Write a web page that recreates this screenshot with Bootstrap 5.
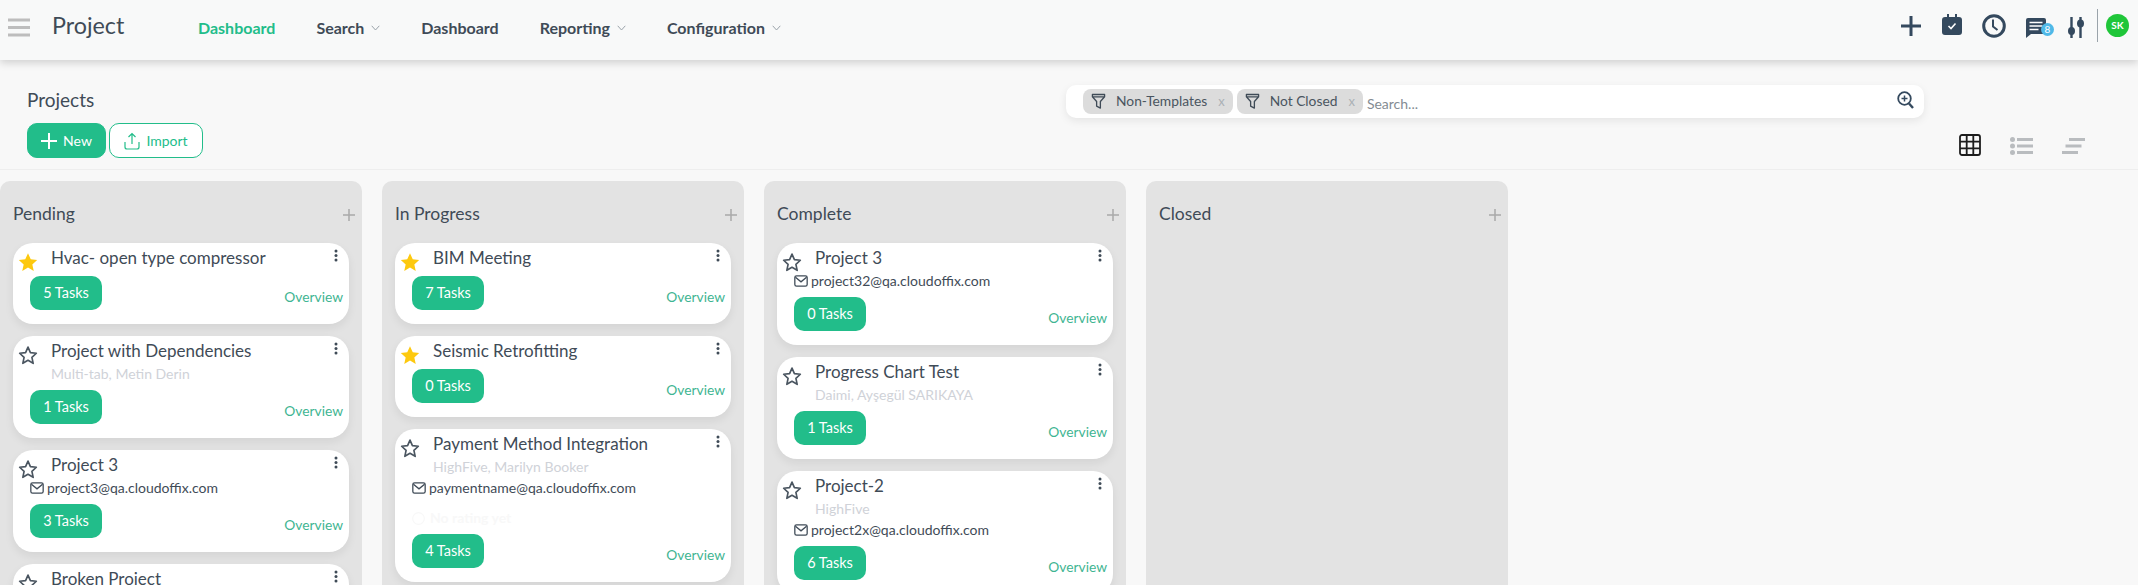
<!DOCTYPE html>
<html lang="en"><head><meta charset="utf-8"><title>Projects</title>
<link href="https://cdn.jsdelivr.net/npm/bootstrap@5.3.0/dist/css/bootstrap.min.css" rel="stylesheet">
<style>
html,body{height:100%}
body{overflow:hidden;background:#f8f8f8;color:#3f4b57;font-family:"Lato","Noto Sans",sans-serif;font-size:14px}
.topbar{height:60px;background:#f8f9f9;box-shadow:0 3px 8px rgba(0,0,0,.16);padding:0 0 0 8px;flex-wrap:nowrap;position:relative;z-index:2}
.burger{width:22px;height:19px;margin-top:-6px;color:#bdbdbd}
.brand-txt{font-size:23.300px;line-height:1;color:#3f4b57;margin:-9px 0 0 22px;width:73px;padding:0}
.menu{margin-left:52.500px}
.topbar .navbar-nav.menu .nav-link{font-size:16px;font-weight:700;color:#3f4b57;padding:0 20.500px;line-height:20px;display:flex;align-items:center;gap:7px;margin-top:-4px}
.topbar .navbar-nav.menu .nav-link.on{color:#22bd8a}
.chev{width:9px;height:6px;color:#9aa3aa}
.tools{margin-left:auto;padding-right:9px;height:60px}
.ti{display:block;color:#34495e}
.sep{width:1px;height:33px;background:#9aa3aa;margin:-10px 8px 0 0}
.ava{width:23px;height:23px;border-radius:50%;background:#1fc639;color:#fff;font-size:10px;font-weight:700;margin-top:-10px}
.toolbar{height:110px;border-bottom:1px solid #eee;padding-left:27px}
.tleft{width:1039px}
.ptitle{font-size:19px;line-height:24px;margin:28px 0 11px;font-weight:400;color:#3f4b57}
.bt{height:35px;border-radius:10px;font-size:14px;font-weight:400;padding:0;display:flex;align-items:center;justify-content:center;gap:6px}
.bt-new{width:79px;background:#22bd8a;border:1px solid #22bd8a;color:#fff}
.bt-imp{width:94px;margin-left:3px;background:#fff;border:1px solid #22bd8a;color:#22bd8a}
.sbar{width:858px;height:33px;margin-top:25px;background:#fff;border-radius:10px;box-shadow:0 3px 9px rgba(0,0,0,.08);padding:0 10px 0 17px}
.chipx{height:25px;border-radius:8px;background:#dcdcdc;color:#4a5560;font-size:13.800px;padding:0 8px;gap:10px;margin-right:4px;white-space:nowrap}
.chipx .xx{color:#aab0b5;font-size:13px;margin-left:1px}
.sinp{font-size:14px;color:#848c93;margin:4px 0 0 0}
.szoom{margin-top:-3px}
.views{margin-left:auto;padding:74px 53px 0 0;gap:29px}
.board{gap:20px;padding-top:11px;height:calc(100vh - 170px);overflow:hidden}
.lane{width:362px;flex:none;background:#e3e3e3;border-radius:10px 10px 0 0;padding:0 13px;height:100%;overflow:hidden}
.lanehead{height:62px;padding-top:21px}
.lanehead span{font-size:17.500px;line-height:24px}
.laneadd{color:#a9a9a9;width:12px;height:12px;margin:7px -6px 0 0}
.tk{border:0;border-radius:20px;background:#fff;box-shadow:0 4px 10px rgba(0,0,0,.07);margin-bottom:12px;padding:4px 0 14px}
.thead{height:24px;padding:0 11px 0 5px}
.star{width:20px;height:20px;flex:none;margin-top:5px}
.tname{font-size:17px;line-height:24px;margin:-1px 0 0 13px;white-space:nowrap;color:#3f4b57}
.dots{width:4px;height:13px;margin:2px 0 0 auto;color:#3f4b57}
.tsub{height:21px;line-height:19px;padding-left:38px;font-size:14px;color:#cfd2d8}
.tmail{height:21px;line-height:19px;padding:0 0 2px 17px;font-size:14px;gap:3px;color:#3f4b57}
.trate{height:30px;line-height:22px;padding:8px 0 0 17px;font-size:14px;color:#f8f8f8;font-weight:700;gap:5px}
.tfoot{padding:5px 6px 0 17px}
.taskb{width:72px;height:34px;border-radius:10px;background:#22bd8a;color:#fff;font-size:14.500px;padding:0;border:0;display:flex;align-items:center;justify-content:center}
.ovw{font-size:13.800px;color:#3fb592;line-height:20px;margin-bottom:3px;text-decoration:none}
</style></head><body>
<svg width="0" height="0" class="d-block" style="position:absolute"><defs>
<symbol id="sf" viewBox="0 0 24 24"><path fill="#fdc90f" d="M12 1.500l3.300 7.300 7.700.8-5.800 5.300 1.700 7.800L12 18.600l-6.900 4.100 1.700-7.800L1 9.600l7.700-.8z"/></symbol>
<symbol id="so" viewBox="0 0 24 24"><path fill="none" stroke="#4a5560" stroke-width="2" stroke-linejoin="round" d="M12 2.500l2.900 6.600 7.100.8-5.300 4.900 1.500 7.200L12 18.400l-6.200 3.600 1.500-7.200L2 9.900l7.100-.8z"/></symbol>
<symbol id="ml" viewBox="0 0 16 14"><rect x=".8" y="1" width="14.400" height="12" rx="2" fill="none" stroke="#3f4b57" stroke-width="1.500"/><path d="M1.500 2.500L8 8l6.500-5.500" fill="none" stroke="#3f4b57" stroke-width="1.500"/></symbol>
<symbol id="dt" viewBox="0 0 4 13"><circle cx="2" cy="2" r="1.500" fill="currentColor"/><circle cx="2" cy="6.500" r="1.500" fill="currentColor"/><circle cx="2" cy="11" r="1.500" fill="currentColor"/></symbol>
<symbol id="pl" viewBox="0 0 12 12"><path d="M6 0v12M0 6h12" stroke="currentColor" stroke-width="1.500"/></symbol>
<symbol id="ch" viewBox="0 0 9 6"><path d="M.7.8L4.500 5 8.300.8" fill="none" stroke="currentColor"/></symbol>
<symbol id="fn" viewBox="0 0 16 18"><path d="M1.500 1.500h13v2.500L10 9v7l-4-2V9L1.500 4z M1.500 4h13" fill="none" stroke="#3f4b57" stroke-width="1.400" stroke-linejoin="round"/></symbol>
</defs></svg>

<nav class="navbar navbar-expand topbar align-items-center">
 <svg class="burger" viewBox="0 0 22 19"><path d="M0 2h22M0 9.500h22M0 17h22" stroke="currentColor" stroke-width="3"/></svg>
 <a class="navbar-brand brand-txt" href="#">Project</a>
 <ul class="navbar-nav menu">
  <li class="nav-item"><a class="nav-link on" href="#">Dashboard</a></li>
  <li class="nav-item"><a class="nav-link" href="#">Search <svg class="chev"><use href="#ch"/></svg></a></li>
  <li class="nav-item"><a class="nav-link" href="#">Dashboard</a></li>
  <li class="nav-item"><a class="nav-link" href="#">Reporting <svg class="chev"><use href="#ch"/></svg></a></li>
  <li class="nav-item"><a class="nav-link" href="#">Configuration <svg class="chev"><use href="#ch"/></svg></a></li>
 </ul>
 <div class="tools d-flex align-items-center">
  <svg class="ti" width="20" height="20" viewBox="0 0 20 20" style="margin:-8px 21px 0 0"><path d="M10 0v20M0 10h20" stroke="#34495e" stroke-width="3"/></svg>
  <svg class="ti" width="20" height="21" viewBox="0 0 20 21" style="margin:-12px 20px 0 0"><path fill="#34495e" d="M3 3h2V0h2v3h6V0h2v3h2a3 3 0 0 1 3 3v12a3 3 0 0 1-3 3H3a3 3 0 0 1-3-3V6a3 3 0 0 1 3-3z"/><path d="M6.500 12l2.500 2.500 4.500-5" fill="none" stroke="#fff" stroke-width="1.600"/></svg>
  <svg class="ti" width="24" height="24" viewBox="0 0 24 24" style="margin:-8px 20px 0 0"><circle cx="12" cy="12" r="10.300" fill="none" stroke="#34495e" stroke-width="3"/><path d="M11 5.500V12.500l4.500 3.500" fill="none" stroke="#34495e" stroke-width="2"/></svg>
  <svg class="ti" width="28" height="20" viewBox="0 0 28 20" style="margin:-4px 14px 0 0"><path fill="#34495e" d="M2 0h16a2 2 0 0 1 2 2v12a2 2 0 0 1-2 2H5l-5 4V2a2 2 0 0 1 2-2z"/><path d="M3.500 4.500h13M3.500 8h13M3.500 11.500h9" stroke="#fff" stroke-width="1.500"/><circle cx="21.500" cy="11.500" r="6.500" fill="#4fb9e8"/><text x="21.500" y="15" text-anchor="middle" font-size="10" fill="#fff" font-family="Lato">8</text></svg>
  <svg class="ti" width="16" height="21" viewBox="0 0 16 21" style="margin:-6px 13px 0 0"><path d="M3.500 0v21M12.500 0v21" stroke="#34495e" stroke-width="2.400"/><ellipse cx="3.500" cy="14" rx="3.500" ry="4" fill="#34495e"/><ellipse cx="12.500" cy="6.500" rx="3.500" ry="4" fill="#34495e"/></svg>
  <div class="sep"></div>
  <div class="ava d-flex align-items-center justify-content-center">SK</div>
 </div>
</nav>

<section class="toolbar d-flex">
 <div class="tleft">
  <h1 class="ptitle">Projects</h1>
  <div class="d-flex">
   <button class="btn bt bt-new"><svg width="16" height="16"><use href="#pl"/></svg>New</button>
   <button class="btn bt bt-imp"><svg width="16" height="18" viewBox="0 0 16 18"><path d="M8 12V2M4.500 5L8 1.500 11.500 5M1 10v5a2 2 0 0 0 2 2h10a2 2 0 0 0 2-2v-5" fill="none" stroke="#22bd8a" stroke-width="1.200"/></svg>Import</button>
  </div>
 </div>
 <div class="sbar d-flex align-items-center">
  <span class="chipx d-flex align-items-center"><svg width="15" height="17"><use href="#fn"/></svg>Non-Templates <span class="xx">x</span></span>
  <span class="chipx d-flex align-items-center"><svg width="15" height="17"><use href="#fn"/></svg>Not Closed <span class="xx">x</span></span>
  <span class="sinp">Search...</span>
  <svg class="ms-auto szoom" width="17" height="18" viewBox="0 0 17 18"><circle cx="7.500" cy="7.500" r="6.300" fill="none" stroke="#34495e" stroke-width="1.800"/><path d="M7.500 4.500v6M4.500 7.500h6" stroke="#34495e" stroke-width="1.500"/><path d="M12 12.500l4 4.500" stroke="#34495e" stroke-width="2.400"/></svg>
 </div>
 <div class="views d-flex align-items-start">
  <svg width="22" height="22" viewBox="0 0 22 22"><rect x="1" y="1" width="20" height="20" rx="2" fill="none" stroke="#1d1d1d" stroke-width="1.800"/><path d="M7.700 1v20M14.300 1v20M1 7.700h20M1 14.300h20" stroke="#1d1d1d" stroke-width="1.800"/></svg>
  <svg width="23" height="18" viewBox="0 0 23 18" style="margin-top:3px"><g fill="#b9bcbf"><circle cx="2.500" cy="2.500" r="2.500"/><circle cx="2.500" cy="9" r="2.500"/><circle cx="2.500" cy="15.500" r="2.500"/><rect x="7" y="1" width="16" height="3"/><rect x="7" y="7.500" width="16" height="3"/><rect x="7" y="14" width="16" height="3"/></g></svg>
  <svg width="23" height="18" viewBox="0 0 23 18" style="margin-top:3px"><g fill="#b9bcbf"><rect x="7" y="1" width="16" height="3"/><rect x="3.500" y="7.500" width="16" height="3"/><rect x="0" y="14" width="16" height="3"/></g></svg>
 </div>
</section>

<main class="board d-flex">
 <div class="lane">
  <div class="lanehead d-flex justify-content-between"><span>Pending</span><svg class="laneadd"><use href="#pl"/></svg></div>
  <div class="card tk"><div class="thead d-flex"><svg class="star"><use href="#sf"/></svg><div class="tname">Hvac- open type compressor</div><svg class="dots"><use href="#dt"/></svg></div><div class="tfoot d-flex justify-content-between align-items-end"><button class="btn taskb">5 Tasks</button><a class="ovw" href="#">Overview</a></div></div>
  <div class="card tk"><div class="thead d-flex"><svg class="star"><use href="#so"/></svg><div class="tname">Project with Dependencies</div><svg class="dots"><use href="#dt"/></svg></div><div class="tsub">Multi-tab, Metin Derin</div><div class="tfoot d-flex justify-content-between align-items-end"><button class="btn taskb">1 Tasks</button><a class="ovw" href="#">Overview</a></div></div>
  <div class="card tk"><div class="thead d-flex"><svg class="star"><use href="#so"/></svg><div class="tname">Project 3</div><svg class="dots"><use href="#dt"/></svg></div><div class="tmail d-flex align-items-center"><svg width="14" height="12"><use href="#ml"/></svg>project3@qa.cloudoffix.com</div><div class="tfoot d-flex justify-content-between align-items-end"><button class="btn taskb">3 Tasks</button><a class="ovw" href="#">Overview</a></div></div>
  <div class="card tk"><div class="thead d-flex"><svg class="star"><use href="#so"/></svg><div class="tname">Broken Project</div><svg class="dots"><use href="#dt"/></svg></div></div>
 </div>
 <div class="lane">
  <div class="lanehead d-flex justify-content-between"><span>In Progress</span><svg class="laneadd"><use href="#pl"/></svg></div>
  <div class="card tk"><div class="thead d-flex"><svg class="star"><use href="#sf"/></svg><div class="tname">BIM Meeting</div><svg class="dots"><use href="#dt"/></svg></div><div class="tfoot d-flex justify-content-between align-items-end"><button class="btn taskb">7 Tasks</button><a class="ovw" href="#">Overview</a></div></div>
  <div class="card tk"><div class="thead d-flex"><svg class="star"><use href="#sf"/></svg><div class="tname">Seismic Retrofitting</div><svg class="dots"><use href="#dt"/></svg></div><div class="tfoot d-flex justify-content-between align-items-end"><button class="btn taskb">0 Tasks</button><a class="ovw" href="#">Overview</a></div></div>
  <div class="card tk"><div class="thead d-flex"><svg class="star"><use href="#so"/></svg><div class="tname">Payment Method Integration</div><svg class="dots"><use href="#dt"/></svg></div><div class="tsub">HighFive, Marilyn Booker</div><div class="tmail d-flex align-items-center"><svg width="14" height="12"><use href="#ml"/></svg>paymentname@qa.cloudoffix.com</div><div class="trate d-flex align-items-center"><svg width="13" height="13" viewBox="0 0 13 13"><circle cx="6.500" cy="6.500" r="5.800" fill="none" stroke="#f8f8f8" stroke-width="1.200"/></svg>No rating yet</div><div class="tfoot d-flex justify-content-between align-items-end"><button class="btn taskb">4 Tasks</button><a class="ovw" href="#">Overview</a></div></div>
 </div>
 <div class="lane">
  <div class="lanehead d-flex justify-content-between"><span>Complete</span><svg class="laneadd"><use href="#pl"/></svg></div>
  <div class="card tk"><div class="thead d-flex"><svg class="star"><use href="#so"/></svg><div class="tname">Project 3</div><svg class="dots"><use href="#dt"/></svg></div><div class="tmail d-flex align-items-center"><svg width="14" height="12"><use href="#ml"/></svg>project32@qa.cloudoffix.com</div><div class="tfoot d-flex justify-content-between align-items-end"><button class="btn taskb">0 Tasks</button><a class="ovw" href="#">Overview</a></div></div>
  <div class="card tk"><div class="thead d-flex"><svg class="star"><use href="#so"/></svg><div class="tname">Progress Chart Test</div><svg class="dots"><use href="#dt"/></svg></div><div class="tsub">Daimi, Ayşegül SARIKAYA</div><div class="tfoot d-flex justify-content-between align-items-end"><button class="btn taskb">1 Tasks</button><a class="ovw" href="#">Overview</a></div></div>
  <div class="card tk"><div class="thead d-flex"><svg class="star"><use href="#so"/></svg><div class="tname">Project-2</div><svg class="dots"><use href="#dt"/></svg></div><div class="tsub">HighFive</div><div class="tmail d-flex align-items-center"><svg width="14" height="12"><use href="#ml"/></svg>project2x@qa.cloudoffix.com</div><div class="tfoot d-flex justify-content-between align-items-end"><button class="btn taskb">6 Tasks</button><a class="ovw" href="#">Overview</a></div></div>
 </div>
 <div class="lane">
  <div class="lanehead d-flex justify-content-between"><span>Closed</span><svg class="laneadd"><use href="#pl"/></svg></div>
 </div>
</main>
<script src="https://cdn.jsdelivr.net/npm/bootstrap@5.3.0/dist/js/bootstrap.bundle.min.js"></script>
</body></html>
